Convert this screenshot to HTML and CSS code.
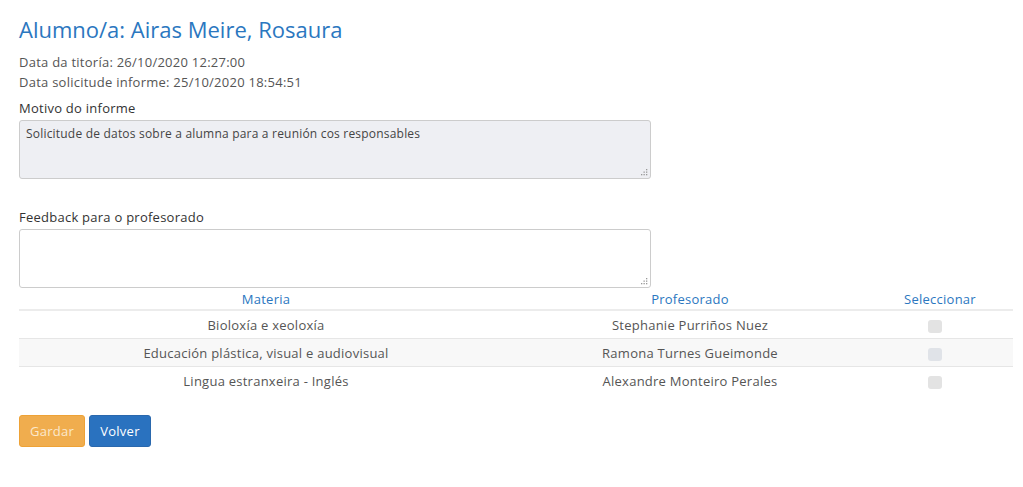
FILE: index.html
```html
<!DOCTYPE html>
<html lang="gl">
<head>
<meta charset="utf-8">
<title>Informe</title>
<link rel="stylesheet" href="styles.css">
</head>
<body>
<div class="page">
  <h1 class="title">Alumno/a: Airas Meire, Rosaura</h1>
  <p class="meta">Data da titoría: 26/10/2020 12:27:00</p>
  <p class="meta">Data solicitude informe: 25/10/2020 18:54:51</p>
  <div class="field">
    <label class="label">Motivo do informe</label>
    <div class="area-wrap">
      <textarea class="area area-readonly" readonly>Solicitude de datos sobre a alumna para a reunión cos responsables</textarea>
      <svg class="grip" width="7" height="7" viewBox="0 0 7 7"><g fill="#999"><rect x="5" y="0" width="1.3" height="1.3"/><rect x="5" y="2.5" width="1.3" height="1.3"/><rect x="2.5" y="2.5" width="1.3" height="1.3"/><rect x="5" y="5" width="1.3" height="1.3"/><rect x="2.5" y="5" width="1.3" height="1.3"/><rect x="0" y="5" width="1.3" height="1.3"/></g></svg>
    </div>
  </div>
  <div class="field field-feedback">
    <label class="label">Feedback para o profesorado</label>
    <div class="area-wrap">
      <textarea class="area"></textarea>
      <svg class="grip" width="7" height="7" viewBox="0 0 7 7"><g fill="#999"><rect x="5" y="0" width="1.3" height="1.3"/><rect x="5" y="2.5" width="1.3" height="1.3"/><rect x="2.5" y="2.5" width="1.3" height="1.3"/><rect x="5" y="5" width="1.3" height="1.3"/><rect x="2.5" y="5" width="1.3" height="1.3"/><rect x="0" y="5" width="1.3" height="1.3"/></g></svg>
    </div>
  </div>
  <table class="grid">
    <thead>
      <tr>
        <th class="c1">Materia</th>
        <th class="c2">Profesorado</th>
        <th class="c3">Seleccionar</th>
      </tr>
    </thead>
    <tbody>
      <tr>
        <td>Bioloxía e xeoloxía</td>
        <td>Stephanie Purriños Nuez</td>
        <td><span class="check"></span></td>
      </tr>
      <tr class="alt">
        <td>Educación plástica, visual e audiovisual</td>
        <td>Ramona Turnes Gueimonde</td>
        <td><span class="check"></span></td>
      </tr>
      <tr>
        <td>Lingua estranxeira - Inglés</td>
        <td>Alexandre Monteiro Perales</td>
        <td><span class="check"></span></td>
      </tr>
    </tbody>
  </table>
  <div class="actions">
    <button class="btn btn-warn">Gardar</button>
    <button class="btn btn-primary">Volver</button>
  </div>
</div>
</body>
</html>
```
FILE: styles.css
```css
html, body {
  margin: 0;
  padding: 0;
  background: #fff;
}
body {
  font-family: "Open Sans", "Liberation Sans", sans-serif;
  font-size: 13px;
  letter-spacing: 0.25px;
  color: #555;
}
.page {
  padding: 14px 10px 0 19px;
}
.title {
  margin: 0 0 8px 0;
  font-size: 22px;
  font-weight: 400;
  letter-spacing: 0;
  color: #2b77bf;
  line-height: 30px;
}
.meta {
  margin: 0;
  line-height: 20px;
  color: #555;
}
.field {
  display: flex;
  flex-direction: column;
  width: 632px;
  margin-top: 7px;
}
.label {
  color: #333;
  line-height: 18px;
  margin-bottom: 3px;
}
.field-feedback {
  margin-top: 29px;
}
.field-feedback .label {
  margin-bottom: 3px;
}
.area-wrap {
  position: relative;
  width: 632px;
  height: 59px;
}
.area {
  display: block;
  box-sizing: border-box;
  width: 632px;
  height: 59px;
  margin: 0;
  border: 1px solid #ccc;
  border-radius: 3px;
  padding: 4px 6px;
  font-family: inherit;
  font-size: 12px;
  letter-spacing: 0.2px;
  color: #555;
  background: #fff;
  resize: none;
}
.area-readonly {
  background: #eeeff3;
  color: #444;
}
.grip {
  position: absolute;
  right: 3px;
  bottom: 3px;
}
.grid {
  width: 994px;
  margin-top: 1px;
  border-collapse: collapse;
}
.grid th {
  font-weight: 400;
  color: #2b77bf;
  height: 20px;
  padding: 0;
  border-bottom: 2px solid #ececec;
  vertical-align: middle;
}
.c1 { width: 494px; }
.c2 { width: 354px; }
.c3 { width: 146px; }
.grid td {
  text-align: center;
  height: 27px;
  padding: 0;
  border-top: 1px solid #e6e6e6;
  color: #555;
}
.grid tbody tr:first-child td {
  border-top: none;
}
.grid tr.alt td {
  background: #f8f8f8;
}
.check {
  display: inline-block;
  width: 14px;
  height: 13px;
  border-radius: 3px;
  background: #e3e3e3;
  vertical-align: middle;
  margin-left: -10px;
}
.grid tr.alt .check {
  background: #e0e3e8;
}
.actions {
  display: flex;
  gap: 4px;
  margin-top: 21px;
}
.btn {
  font-family: inherit;
  font-size: 13px;
  letter-spacing: 0.25px;
  height: 32px;
  padding: 0;
  border-radius: 3px;
  border: 1px solid transparent;
  cursor: pointer;
}
.btn-warn {
  background: #f0ad4e;
  border-color: #eea236;
  color: #fbe8cc;
  width: 66px;
}
.btn-primary {
  background: #2a72bf;
  border-color: #2a68ad;
  color: #fff;
  width: 62px;
}
```
